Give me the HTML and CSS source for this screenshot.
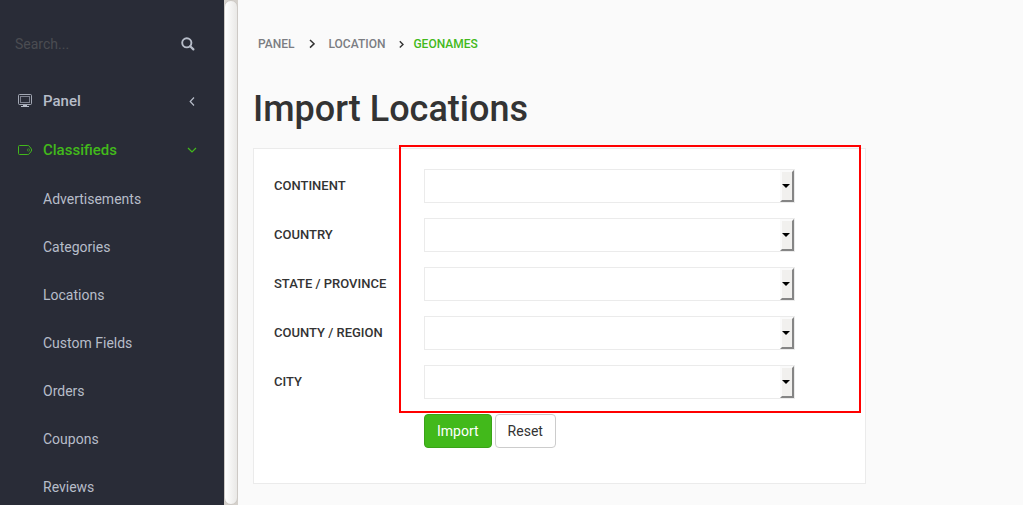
FILE: index.html
```html
<!DOCTYPE html>
<html lang="en">
<head>
<meta charset="utf-8">
<title>Import Locations</title>
<link rel="stylesheet" href="styles.css">
</head>
<body>
<div class="layout">
  <aside class="sidebar">
    <div class="sidebar-body">
      <form class="search">
        <input class="search-input" type="text" placeholder="Search..." aria-label="Search">
        <button class="search-button" type="button" aria-label="Search">
          <svg width="14" height="14" viewBox="0 0 14 14" fill="none" stroke="currentColor"><circle cx="5.8" cy="5.8" r="4.6" stroke-width="1.9"/><path d="M9.2 9.2l3.2 3.2" stroke-width="2.2" stroke-linecap="round"/></svg>
        </button>
      </form>
      <nav class="menu">
        <a class="menu-item" href="#">
          <svg width="16" height="16" viewBox="0 0 16 16" fill="none" stroke="currentColor"><rect x="1.5" y="1.5" width="13" height="10" rx="1" stroke-opacity=".85"/><rect x="3.5" y="3.5" width="9" height="6" stroke-opacity=".6"/><path d="M6 12.5h4M4 13.5h8"/></svg>
          <span class="menu-label">Panel</span>
          <svg class="menu-arrow" width="10" height="10" viewBox="0 0 10 10" fill="none" stroke="currentColor" stroke-width="1.2"><path d="M7 1.5L3.2 5.5 7 9.5"/></svg>
        </a>
        <a class="menu-item active" href="#">
          <svg width="16" height="16" viewBox="0 0 16 16" fill="none" stroke="currentColor"><path d="M2.5 3.5h8.3c.7 0 1.1.2 1.5.7l2 2.7c.4.6.4 1.6 0 2.2l-2 2.7c-.4.5-.8.7-1.5.7H2.5a1 1 0 0 1-1-1v-7a1 1 0 0 1 1-1z"/><circle cx="11.5" cy="8" r="1.2" stroke-opacity=".55"/></svg>
          <span class="menu-label">Classifieds</span>
          <svg class="menu-arrow" width="10" height="10" viewBox="0 0 10 10" fill="none" stroke="currentColor" stroke-width="1.2"><path d="M1 3l4 4 4-4"/></svg>
        </a>
        <div class="submenu">
          <a href="#">Advertisements</a>
          <a href="#">Categories</a>
          <a href="#">Locations</a>
          <a href="#">Custom Fields</a>
          <a href="#">Orders</a>
          <a href="#">Coupons</a>
          <a href="#">Reviews</a>
        </div>
      </nav>
    </div>
    <div class="scroll-track"><div class="scroll-thumb"></div></div>
  </aside>
  <main class="content">
    <nav class="breadcrumb" aria-label="Breadcrumb">
      <a href="#">Panel</a>
      <svg width="6" height="10" viewBox="0 0 6 10" fill="none" stroke="currentColor" stroke-width="1.5"><path d="M1 1l4 3.8L1 8.6"/></svg>
      <a href="#">Location</a>
      <svg width="6" height="10" viewBox="0 0 6 10" fill="none" stroke="currentColor" stroke-width="1.4"><path d="M.8 2.2L4 5.4.8 8.6"/></svg>
      <a class="current" href="#">Geonames</a>
    </nav>
    <h1>Import Locations</h1>
    <form class="card">
      <div class="row"><label for="continent">Continent</label><span class="picker"><select id="continent"></select></span></div>
      <div class="row"><label for="country">Country</label><span class="picker"><select id="country"></select></span></div>
      <div class="row"><label for="state">State / Province</label><span class="picker"><select id="state"></select></span></div>
      <div class="row"><label for="county">County / Region</label><span class="picker"><select id="county"></select></span></div>
      <div class="row"><label for="city">City</label><span class="picker"><select id="city"></select></span></div>
      <div class="actions">
        <button class="btn primary" type="button">Import</button>
        <button class="btn" type="reset">Reset</button>
      </div>
      <div class="highlight"></div>
    </form>
  </main>
</div>
</body>
</html>
```
FILE: styles.css
```css
*, *::before { box-sizing: border-box; }
body {
  margin: 0;
  background: #fafafa;
  color: #333;
  font: 14px/20px Roboto, "Liberation Sans", sans-serif;
}
a { color: inherit; text-decoration: none; }
svg { flex: none; }
.layout { display: flex; height: 100vh; overflow: hidden; }

.sidebar { display: flex; flex: none; width: 238px; background: #292c37; color: #b7bdc9; }
.sidebar-body { flex: 1; overflow: hidden; }
.search { display: flex; align-items: center; height: 76px; padding: 12px 29px 0 15px; }
.search-input {
  flex: 1;
  min-width: 0;
  padding: 0;
  border: 0;
  outline: 0;
  background: transparent;
  color: inherit;
  font: inherit;
}
.search-input::placeholder { color: #4b4c52; opacity: 1; }
.search-button { display: flex; padding: 0; border: 0; background: none; color: #b7bdc9; }
.menu-item {
  display: flex;
  align-items: center;
  height: 49px;
  padding: 0 27px 0 17px;
  font-size: 15px;
  font-weight: 500;
}
.menu-item.active { color: #42b91b; }
.menu-label { flex: 1; padding-left: 10px; }
.submenu { padding-top: 1px; }
.submenu a { display: flex; align-items: center; height: 48px; padding-left: 43px; }

.scroll-track { display: flex; width: 14px; background: #d4d0cb; }
.scroll-thumb {
  flex: 1;
  border: 1px solid #cdc9c5;
  border-radius: 7px;
  background: linear-gradient(to right, #fff, #e9e8e6);
}

.content { flex: 1; min-width: 0; padding: 34px 15px 20px; }
.breadcrumb {
  display: flex;
  align-items: center;
  gap: 14px;
  padding-left: 5px;
  font-size: 12px;
  font-weight: 500;
  text-transform: uppercase;
}
.breadcrumb a { color: #7b7d82; }
.breadcrumb .current { margin-left: -6px; color: #42b91b; }
h1 { margin: 35px 0 19px; font-size: 36px; line-height: 40px; font-weight: 500; }

.card {
  position: relative;
  max-width: 613px;
  padding: 20px 70px 35px 20px;
  border: 1px solid #ebebeb;
  background: #fff;
}
.row { display: flex; align-items: center; margin-bottom: 15px; }
.row label { flex: none; width: 150px; font-size: 13px; font-weight: 500; text-transform: uppercase; }
.picker { display: flex; flex: 1; position: relative; }
.picker select {
  width: 100%;
  height: 34px;
  border: 1px solid #ebebeb;
  border-radius: 0;
  background: #fff;
  appearance: none;
}
.picker::before {
  content: "";
  position: absolute;
  top: 1px;
  right: 1px;
  bottom: 1px;
  width: 14px;
  border: 2px solid;
  border-color: #fafafa #858585 #858585 #fafafa;
  background: #f1f0ee;
  pointer-events: none;
}
.picker::after {
  content: "";
  position: absolute;
  top: 15px;
  right: 5px;
  border: 4px solid transparent;
  border-top-color: #000;
  border-bottom: 0;
  pointer-events: none;
}
.actions { display: flex; gap: 3px; padding-left: 150px; }
.btn {
  height: 34px;
  padding: 0 12px;
  border: 1px solid #ccc;
  border-radius: 4px;
  background: #fff;
  color: #333;
  font: inherit;
}
.btn.primary { border-color: #3aa318; background: #42b91b; color: #fff; }
.highlight {
  position: absolute;
  top: -4px;
  left: 145px;
  right: 4px;
  bottom: 70px;
  border: 2px solid #f00;
  pointer-events: none;
}
```
